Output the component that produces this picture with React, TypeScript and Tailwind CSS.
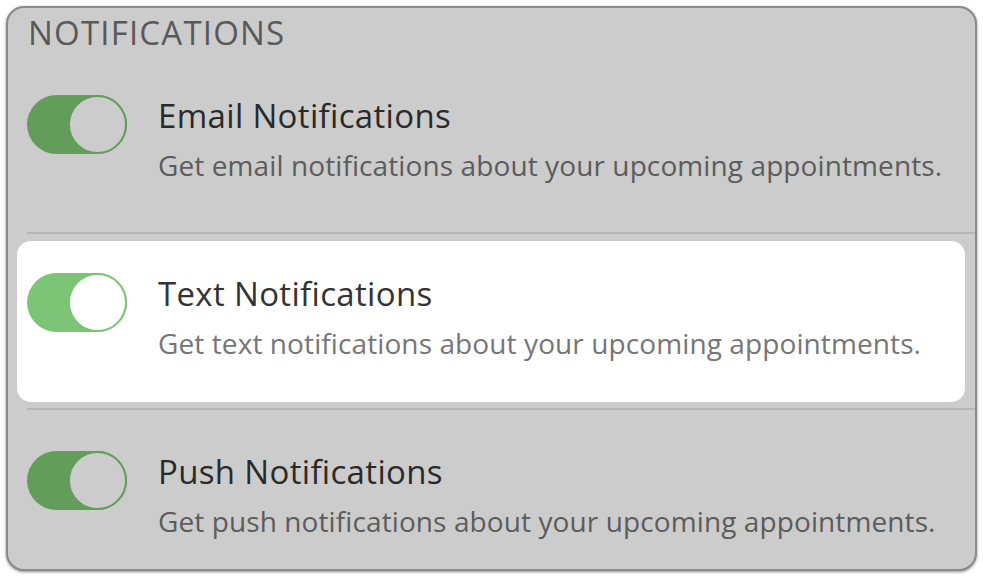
import React from "react";

function Toggle({ dim }: { dim: boolean }) {
  return (
    <div
      className={
        "relative h-[59px] w-[100px] shrink-0 rounded-full " +
        (dim ? "bg-[#629e5a]" : "bg-[#7dc576]")
      }
    >
      <div
        className={
          "absolute right-0 top-0 h-[59px] w-[59px] rounded-full border-2 " +
          (dim ? "border-[#629e5a] bg-[#cccccc]" : "border-[#7dc576] bg-white")
        }
      />
    </div>
  );
}

function Row({ title, desc, dim }: { title: string; desc: string; dim: boolean }) {
  return (
    <div className="flex items-start">
      <Toggle dim={dim} />
      <div className="ml-[31px] flex flex-col pt-[5px]">
        <div
          className={
            "whitespace-nowrap text-[33px] leading-[32px] tracking-[0.33px] " +
            (dim ? "text-[#2a2a2a]" : "text-[#333333]")
          }
        >
          {title}
        </div>
        <div
          className={
            "mt-[17px] whitespace-nowrap text-[28px] leading-[32px] tracking-[0.1px] " +
            (dim ? "text-[#5c5c5c]" : "text-[#767676]")
          }
        >
          {desc}
        </div>
      </div>
    </div>
  );
}

export default function App() {
  return (
    <div
      className="h-[577px] w-[983px] bg-white pl-[6px] pt-[6px]"
      style={{ fontFamily: '"Open Sans", "Liberation Sans", sans-serif' }}
    >
      <div className="h-[565px] w-[971px] overflow-hidden rounded-[18px] border-2 border-[#8a8a8a] bg-[#cccccc] shadow-[0_1px_3px_rgba(0,0,0,0.45)]">
        <div className="pl-[20px] pt-[9px] text-[33px] leading-[32px] tracking-[1.2px] text-[#595959]">
          NOTIFICATIONS
        </div>
        <div className="mt-[46px] h-[137px] pl-[19px]">
          <Row
            dim
            title="Email Notifications"
            desc="Get email notifications about your upcoming appointments."
          />
        </div>
        <div className="ml-[19px] h-[2px] bg-[#b6b6b6]" />
        <div className="ml-[9px] mr-[10px] mt-[7px] h-[161px] rounded-[14px] bg-white pl-[10px] pt-[32px]">
          <Row
            dim={false}
            title="Text Notifications"
            desc="Get text notifications about your upcoming appointments."
          />
        </div>
        <div className="ml-[19px] mt-[6px] h-[2px] bg-[#b6b6b6]" />
        <div className="mt-[41px] pl-[19px]">
          <Row
            dim
            title="Push Notifications"
            desc="Get push notifications about your upcoming appointments."
          />
        </div>
      </div>
    </div>
  );
}
